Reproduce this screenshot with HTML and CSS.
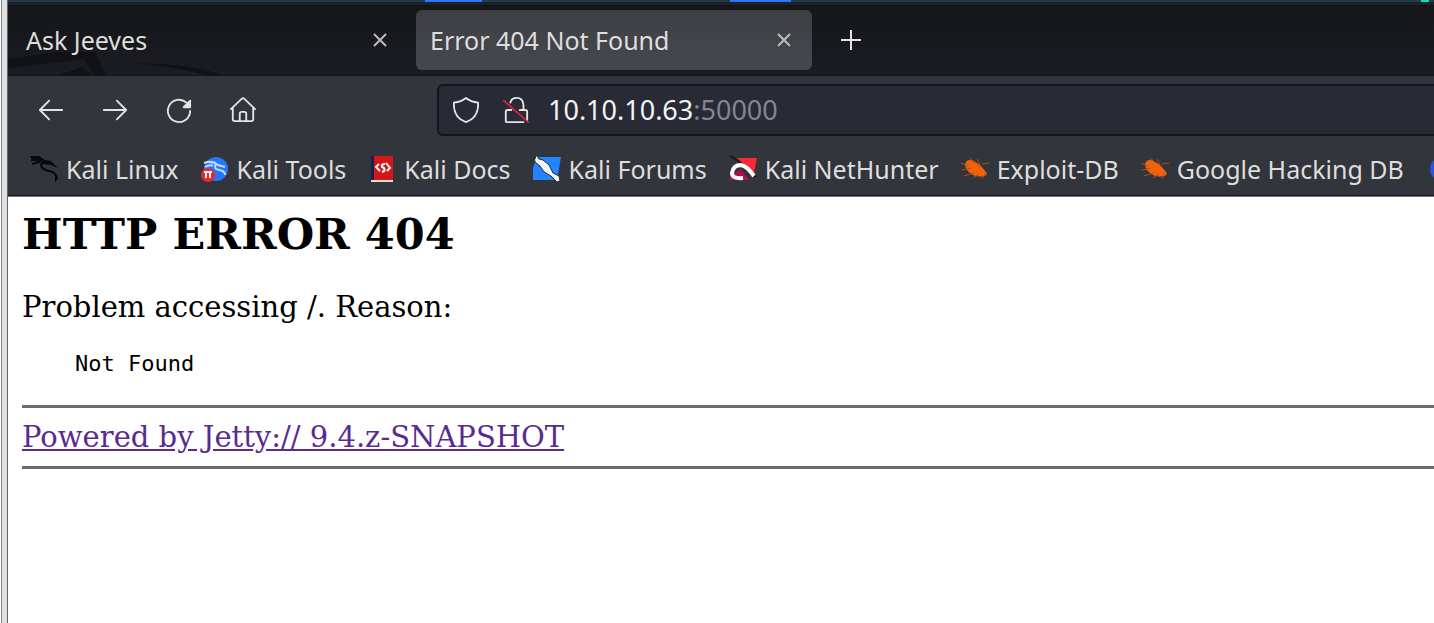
FILE: index.html
```
<!DOCTYPE html>
<html lang="en">
  <head>
    <meta charset="UTF-8" />
    <meta name="viewport" content="width=device-width, initial-scale=1.0" />
    <title>Error 404 Not Found</title>
    <link rel="stylesheet" href="styles.css" />
  </head>
  <body>
    <div class="frame"></div>
    <div class="browser">
      <div class="panel">
        <span class="task task-one"></span>
        <span class="task task-two"></span>
        <span class="task task-tray"></span>
      </div>

      <div class="tabs">
        <svg class="wallpaper" viewBox="0 0 230 24" aria-hidden="true">
          <path d="M0 8 L50 1 L87 1 L98 24 L86 24 L76 8 L0 17z" fill="#111216" />
          <path d="M50 24 L75 16 L84 24z" fill="#111216" />
          <path d="M125 12 Q180 12 214 24 L198 24 Q165 15 125 12z" fill="#101115" />
        </svg>
        <div class="tab">
          <span class="tab-title">Ask Jeeves</span>
          <button class="close" aria-label="Close tab">
            <svg viewBox="0 0 14 14"><path d="M1 1l12 12M13 1L1 13" /></svg>
          </button>
        </div>
        <div class="tab active">
          <span class="tab-title">Error 404 Not Found</span>
          <button class="close" aria-label="Close tab">
            <svg viewBox="0 0 14 14"><path d="M1 1l12 12M13 1L1 13" /></svg>
          </button>
        </div>
        <button class="new-tab" aria-label="New tab">
          <svg viewBox="0 0 22 22"><path d="M11 1v20M1 11h20" /></svg>
        </button>
      </div>

      <div class="toolbar">
        <div class="nav">
          <button aria-label="Back">
            <svg viewBox="0 0 28 28"><path d="M26 14H2M12 4L2 14l10 10" /></svg>
          </button>
          <button aria-label="Forward">
            <svg viewBox="0 0 28 28"><path d="M2 14h24M16 4l10 10-10 10" /></svg>
          </button>
          <button aria-label="Reload">
            <svg viewBox="0 0 28 28">
              <path d="M26 15A12 12 0 1 1 22 6" />
              <path d="M26 4v7h-7z" fill="#e4e4e2" />
            </svg>
          </button>
          <button aria-label="Home">
            <svg viewBox="0 0 28 28">
              <path d="M1 13L12.500 2q1.500-1.300 3 0L27 13M3 11v13q0 2 2 2h18q2 0 2-2V11M10.500 26v-8q0-2 2-2h3q2 0 2 2v8" />
            </svg>
          </button>
        </div>
        <div class="url-bar">
          <svg viewBox="0 0 28 28">
            <path d="M14 1q5 4 13 5Q28 22 14 27Q0 22 1 6Q9 5 14 1z" />
          </svg>
          <svg viewBox="0 0 28 28">
            <path d="M8 6q1-5 7-5t7 7v5M18 14h6q2 0 2 2v9M22 27H4q-1 0-1-1V16q0-2 2-2h4" />
            <path class="slash" d="M1 4l26 23" />
          </svg>
          <div class="address">
            <input type="text" id="url" class="host" value="10.10.10.63" aria-label="Address" /><label class="port" for="url">:50000</label>
          </div>
        </div>
      </div>

      <nav class="bookmarks">
        <a href="#">
          <svg viewBox="0 0 28 28">
            <path d="M0 1l9 0 6 4 6 1 5 5 1 2-6-3-7-1q-3 1-1 3 3 3 7 3 7 2 8 8l-3 5v-7q-2-4-7-4-8-2-8-7 0-2 2-3L3 6z" fill="#08090b" />
            <path d="M1 5l9 0M2 9l8-2" stroke="#08090b" stroke-width="2" />
          </svg>
          Kali Linux
        </a>
        <a href="#">
          <svg viewBox="0 0 28 28">
            <circle cx="15" cy="14" r="12" fill="#2478f6" />
            <path d="M3 8q8-3 14 2l7 2M4 12q5-3 8-1M15 9q-3 5 3 6t6 5" fill="none" stroke="#bfdcff" stroke-width="2" />
            <circle cx="7" cy="20" r="7" fill="#ed2630" />
            <path d="M3 17h8M5 17v6M9 17v6" stroke="#fff" stroke-width="2" />
          </svg>
          Kali Tools
        </a>
        <a href="#">
          <svg viewBox="0 0 28 28">
            <path d="M3 1h22v26H3z" fill="#d51618" />
            <path d="M3 1h3v26H3z" fill="#172156" />
            <path d="M3 25h22v2H3z" fill="#e3d9d9" />
            <path d="M11 9l-3 3 4 4M18 8l4 5-3 3M17 9q-4 0-3 3l2 1q2 3-2 4" fill="none" stroke="#fff" stroke-width="2" />
          </svg>
          Kali Docs
        </a>
        <a href="#">
          <svg viewBox="0 0 28 28">
            <path d="M4 2h24l-4 23H0V13z" fill="#2384ff" />
            <path d="M1 1l1 6 5 4 4 6 7 4 6 6 3-1-1-5-6-3-4-8-6-5-4-1-3-4-1 4z" fill="#f7f7f7" stroke="#202c3c" />
          </svg>
          Kali Forums
        </a>
        <a href="#">
          <svg viewBox="0 0 28 28">
            <path d="M8 3h20l-4 20z" fill="#fb2836" />
            <path d="M0 24l3-5 9-4 8 10H0z" fill="#b01045" />
            <path d="M1 1l10 6 16 15" fill="none" stroke="#16171b" stroke-width="2" />
            <path d="M14 23q-11 1-11-5 1-8 9-8 6 1 13 11" fill="none" stroke="#fff" stroke-width="4" />
          </svg>
          Kali NetHunter
        </a>
        <a href="#">
          <svg viewBox="0 0 28 28">
            <path d="M4 9q2-6 9-3l7 5 5 6q2 3-2 4-8 2-14-3Q4 14 4 9z" fill="#f2620d" />
            <path d="M0 8l7 3M9 3l5 5M16 4l4 8M21 9l7-1M1 15l9-2M3 21l10-3M12 23l6-4M24 19l-3 5" stroke="#ad4d18" />
          </svg>
          Exploit-DB
        </a>
        <a href="#">
          <svg viewBox="0 0 28 28">
            <path d="M4 9q2-6 9-3l7 5 5 6q2 3-2 4-8 2-14-3Q4 14 4 9z" fill="#f2620d" />
            <path d="M0 8l7 3M9 3l5 5M16 4l4 8M21 9l7-1M1 15l9-2M3 21l10-3M12 23l6-4M24 19l-3 5" stroke="#ad4d18" />
          </svg>
          Google Hacking DB
        </a>
        <a href="#" aria-label="OffSec">
          <svg viewBox="0 0 28 28"><circle cx="16" cy="14" r="12" fill="#2b55df" /></svg>
        </a>
      </nav>

      <main class="page">
        <h2>HTTP ERROR 404</h2>
        <p>Problem accessing /. Reason:</p>
        <pre>    Not Found</pre>
        <hr />
        <a href="#">Powered by Jetty:// 9.4.z-SNAPSHOT</a>
        <hr />
      </main>
    </div>
  </body>
</html>
```
FILE: styles.css
```
body {
  margin: 0;
  display: flex;
  min-height: 100vh;
  overflow: hidden;
  background-color: #fff;
  font-family: "Noto Sans", sans-serif;
  font-size: 25px;
  line-height: 32px;
}
button {
  padding: 0;
  border: none;
  background: none;
  display: flex;
  cursor: pointer;
}
svg {
  flex: none;
  box-sizing: border-box;
}
.frame {
  box-sizing: border-box;
  flex: none;
  width: 7px;
  margin-left: 1px;
  border-left: 1px solid #85878a;
  border-right: 1px solid #65676a;
  background-color: #dfe1e3;
}
.browser {
  flex: 1;
  min-width: 0;
}

/* desktop panel above the window */
.panel {
  display: flex;
  height: 2px;
  padding: 0 5px 0 417px;
  background-color: #243c50;
  border-bottom: 3px solid #1d2025;
}
.task {
  background-color: #2777ff;
}
.task-one {
  width: 57px;
  margin-right: 248px;
}
.task-two {
  width: 61px;
}
.task-tray {
  width: 8px;
  margin-left: auto;
  background-color: #00e0c4;
}

/* tabs */
.tabs {
  position: relative;
  display: flex;
  align-items: center;
  gap: 8px;
  padding: 5px 4px;
  background: linear-gradient(#15161a, #1b1c21);
  border-bottom: 1px solid #141519;
}
.wallpaper {
  position: absolute;
  left: 0;
  bottom: 0;
  width: 230px;
}
.tab {
  position: relative;
  box-sizing: border-box;
  display: flex;
  align-items: center;
  justify-content: space-between;
  width: 396px;
  padding: 14px 20px 14px 14px;
  border-radius: 6px;
  color: #dededc;
}
.tab.active {
  background: linear-gradient(#3e3f43, #454850);
}
.close svg {
  width: 16px;
  padding: 1px;
}
.close path {
  stroke: #bcbcbc;
  stroke-width: 2;
}
.new-tab path {
  stroke: #e4e4e2;
  stroke-width: 2;
}
.new-tab {
  margin-left: 20px;
}
.new-tab svg {
  width: 22px;
}

/* navigation */
.toolbar {
  display: flex;
  align-items: center;
  padding: 8px 0 0 29px;
  background-color: #33353d;
}
.nav {
  display: flex;
  gap: 36px;
  margin-right: 180px;
}
.nav svg,
.url-bar svg {
  width: 28px;
  padding: 1px;
  fill: none;
  stroke: #e4e4e2;
  stroke-width: 2;
  stroke-linecap: round;
  stroke-linejoin: round;
}
.url-bar {
  flex: 1;
  display: flex;
  align-items: center;
  gap: 22px;
  padding: 8px 13px;
  background-color: #282a36;
  border: 2px solid #15161b;
  border-right: none;
  border-radius: 6px 0 0 6px;
}
.url-bar .slash {
  stroke: #d51f45;
}
.address {
  display: flex;
  margin-left: -4px;
  font-size: 27px;
}
.host {
  field-sizing: content;
  padding: 0;
  border: none;
  outline: none;
  background: none;
  color: #f4f4f2;
  font: inherit;
}
.port {
  color: #85868c;
}

/* bookmarks */
.bookmarks {
  display: flex;
  gap: 22px;
  padding: 17px 0 10px 22px;
  overflow: hidden;
  background-color: #33353d;
  border-bottom: 1px solid #141519;
}
.bookmarks a {
  display: flex;
  align-items: center;
  gap: 8px;
  color: #dededc;
  text-decoration: none;
  white-space: nowrap;
}
.bookmarks svg {
  width: 28px;
}

/* error page */
.page {
  padding: 12px 0 0 14px;
  border-top: 1px solid #77797d;
  color: #000;
  font-family: "DejaVu Serif", serif;
  font-size: 29px;
}
.page h2 {
  margin: 0 0 32px;
  font-size: 43px;
  line-height: 50px;
}
.page p {
  margin: 0 0 25px;
}
.page pre {
  margin: 0 0 25px;
  font-family: "DejaVu Sans Mono", monospace;
  font-size: 22px;
}
.page hr {
  height: 3px;
  margin: 13px 0;
  border: none;
  background-color: #6b6b6b;
}
.page a {
  color: #5b2a91;
}
```
